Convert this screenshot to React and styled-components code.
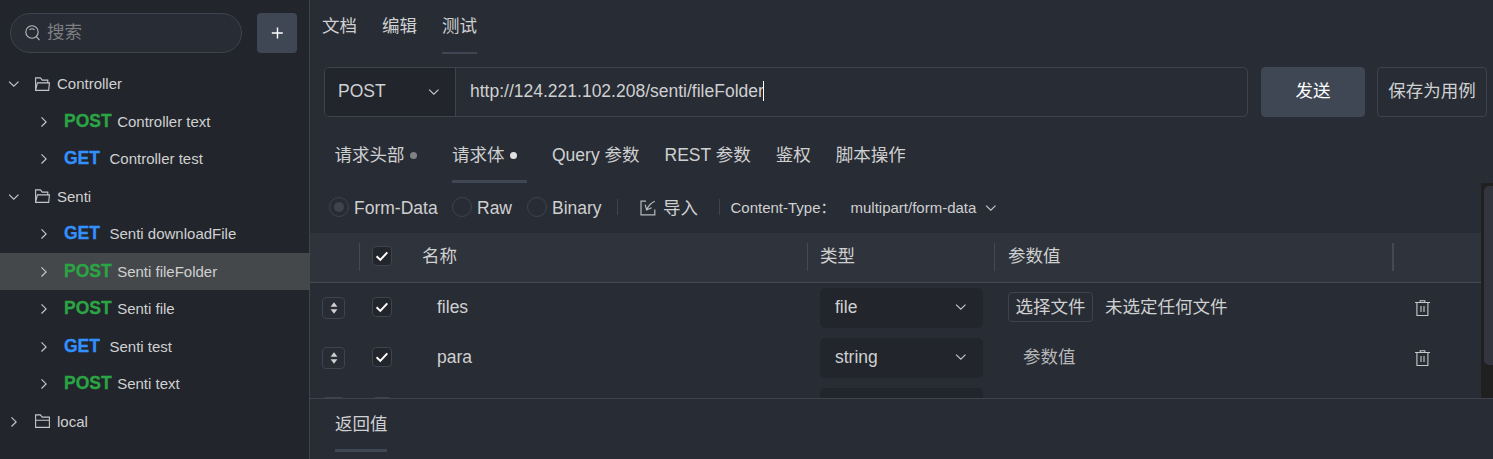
import React from 'react';
import styled, { createGlobalStyle, css } from 'styled-components';

const c = {
  side: '#22252b',
  main: '#282c34',
  head: '#2f333b',
  line: '#3e434e',
  accent: '#404754',
  text: '#cfd0d1',
};

const Global = createGlobalStyle`
  * { box-sizing: border-box; }
  html, body { margin: 0; height: 459px; overflow: hidden; background: ${c.main}; }
  body {
    font-family: "Liberation Sans", Arial, "Noto Sans CJK SC", sans-serif;
    font-size: 17.5px;
    line-height: 24px;
    color: ${c.text};
  }
`;

const Page = styled.div`
  display: flex;
  width: 1493px;
  height: 459px;
  overflow: hidden;
  white-space: nowrap;
`;

/* Sidebar */
const Sidebar = styled.aside`
  flex: 0 0 310px;
  min-width: 0;
  background: ${c.side};
  border-right: 1px solid ${c.line};
`;
const SearchRow = styled.div`
  display: flex;
  gap: 15px;
  padding: 13px 0 12.4px 10px;
`;
const SearchBox = styled.div`
  display: flex;
  align-items: center;
  gap: 7px;
  width: 232px;
  height: 40px;
  padding: 0 14px 3px;
  border: 1px solid ${c.line};
  border-radius: 20px;
  background: ${c.main};
  color: #7d7f82;
  svg { position: relative; top: 1.5px; }
`;
const AddButton = styled.button`
  display: grid;
  place-items: center;
  width: 40px;
  height: 40px;
  padding: 0;
  border: 0;
  border-radius: 4px;
  background: ${c.accent};
`;
const TreeRow = styled.div`
  display: flex;
  align-items: center;
  width: 310px;
  height: 37.5px;
  padding-left: ${(p) => (p.$nested ? '37px' : '7px')};
  font-size: 15px;
  background: ${(p) => (p.$selected ? '#45484b' : 'transparent')};
`;
const FolderLabel = styled.span`
  margin-left: 7px;
`;
const Method = styled.b`
  min-width: 40px;
  margin: 0 5.5px 2px 13px;
  font-size: 17.5px;
  -webkit-text-stroke: 0.3px;
  color: ${(p) => (p.$kind === 'POST' ? '#2ba544' : '#3391ff')};
`;
const TwistySlot = styled.span`
  display: grid;
  place-items: center;
  width: 14px;
  margin-right: ${(p) => (p.$folder ? '14px' : '0')};
`;

/* Main area */
const Main = styled.main`
  display: flex;
  flex-direction: column;
  flex: 1;
  min-width: 0;
  background: ${c.main};
`;
const PageTabs = styled.nav`
  display: flex;
  gap: 25px;
  height: 54px;
  padding-left: 12px;
`;
const PageTab = styled.span`
  width: 35px;
  padding-top: 14px;
  border-bottom: 2px solid ${(p) => (p.$active ? c.accent : 'transparent')};
`;
const RequestBar = styled.div`
  display: flex;
  height: 50px;
  margin: 13px 6px 0 14px;
`;
const UrlGroup = styled.div`
  display: flex;
  width: 924px;
  border: 1px solid ${c.line};
  border-radius: 5px;
  overflow: hidden;
`;
const MethodSelect = styled.div`
  display: flex;
  align-items: center;
  justify-content: space-between;
  width: 131px;
  padding: 0 14px 2px 13px;
  background: ${c.side};
  border-right: 1px solid ${c.line};
  svg { position: relative; top: 1px; }
`;
const UrlField = styled.div`
  display: flex;
  align-items: center;
  padding: 0 0 2px 14px;
`;
const Caret = styled.i`
  width: 1px;
  height: 20px;
  margin-left: -1px;
  background: #fff;
`;
const ActionButton = styled.button`
  width: ${(p) => (p.$primary ? '104px' : '110px')};
  margin-left: ${(p) => (p.$primary ? '13px' : '12px')};
  padding: 0 0 2px;
  border: 1px solid ${(p) => (p.$primary ? c.accent : c.line)};
  border-radius: 4px;
  background: ${(p) => (p.$primary ? c.accent : 'transparent')};
  color: ${(p) => (p.$primary ? '#fff' : c.text)};
  font: inherit;
  white-space: nowrap;
`;
const SectionTabs = styled.nav`
  display: flex;
  gap: 25px;
  height: 66px;
  padding-left: 24.5px;
`;
const SectionTab = styled.span`
  display: flex;
  padding-top: 26px;
  border-bottom: 3px solid ${(p) => (p.$active ? c.accent : 'transparent')};
`;
const Dot = styled.i`
  width: 7px;
  height: 7px;
  margin: 9px 10.5px 0 5px;
  border-radius: 50%;
  background: ${(p) => (p.$bright ? '#e0e0e1' : '#7f8183')};
`;

const Scroller = styled.section`
  display: flex;
  height: 215px;
  overflow: hidden;
`;
const Content = styled.div`
  width: 1171px;
`;
const Track = styled.div`
  width: 12px;
  padding: 3px 0 0 3px;
  background: #202020;
`;
const Thumb = styled.div`
  height: 179px;
  border-radius: 5px 0 0 5px;
  background: #32353e;
`;
const Options = styled.div`
  display: flex;
  align-items: center;
  height: 50px;
  padding: 0 0 1px 19px;
`;
const RadioOption = styled.label`
  display: flex;
  align-items: center;
  gap: 5px;
  width: ${(p) => p.$width}px;
`;
const RadioMark = styled.i`
  display: grid;
  place-items: center;
  width: 20px;
  height: 20px;
  flex: none;
  margin-top: -1px;
  border: 1px solid ${c.line};
  border-radius: 50%;
  ${(p) => p.$on && css`&::after { content: ''; width: 10px; height: 10px; border-radius: 50%; background: ${c.line}; }`}
`;
const Separator = styled.i`
  width: 1px;
  height: 16px;
  margin-top: -1px;
  background: ${c.line};
`;
const ImportLink = styled.span`
  display: flex;
  align-items: center;
  gap: 7px;
  width: 101px;
  padding-left: 22px;
`;
const ContentType = styled.span`
  display: flex;
  align-items: center;
  margin-left: 10.5px;
  font-size: 15px;
`;
const TypeLabel = styled.span`
  width: 120px;
`;
const TypeValue = styled.span`
  margin-right: 8px;
`;

const rowGrid = css`
  display: grid;
  grid-template-columns: 50px 448px 187px 399px 87px;
`;
const HeadRow = styled.div`
  ${rowGrid}
  height: 50px;
  background: ${c.head};
  border-bottom: 1px solid #454950;
`;
const HeadCell = styled.div`
  display: flex;
  align-items: center;
  padding: 0 0 3px ${(p) => p.$pad ?? 0}px;
  background: linear-gradient(#454953, #454953) right 10px / ${(p) => p.$rule ?? 1}px 28px no-repeat;
  &:last-child { background: none; }
`;
const HeadName = styled.span`
  margin-left: 30px;
`;
const Row = styled.div`
  ${rowGrid}
  height: 50px;
`;
const Cell = styled.div`
  display: flex;
  align-items: flex-start;
  padding: ${(p) => p.$top ?? 0}px 0 0 ${(p) => p.$left ?? 0}px;
`;
const CheckMark = styled.i`
  display: grid;
  place-items: center;
  width: 20px;
  height: 20px;
  border: 1px solid ${c.line};
  border-radius: 4px;
  background: ${c.side};
`;
const SortButton = styled.i`
  display: grid;
  place-items: center;
  width: 23px;
  height: 22px;
  border: 1px solid ${c.line};
  border-radius: 4px;
`;
const FieldName = styled.span`
  margin: -2px 0 0 45px;
`;
const TypeSelect = styled.div`
  display: flex;
  align-items: center;
  justify-content: space-between;
  width: 163px;
  height: 40px;
  padding: 0 15px 2px;
  border-radius: 5px;
  background: ${c.side};
`;
const FileButton = styled.button`
  width: 85px;
  height: 30px;
  margin-right: 12px;
  padding: 0 0 1px;
  border: 1px solid ${c.line};
  border-radius: 4px;
  background: transparent;
  color: ${c.text};
  font: inherit;
`;
const FileState = styled.span`
  line-height: 30px;
`;
const Placeholder = styled.span`
  padding-left: 15px;
  line-height: 30px;
  color: #b7b8ba;
`;
const ResponsePane = styled.section`
  flex: 1;
  border-top: 1px solid ${c.line};
  padding-left: 25px;
`;
const ResponseTab = styled.div`
  width: 52px;
  height: 53px;
  padding-top: 13px;
  border-bottom: 3px solid ${c.accent};
`;

const Chevron = ({ right }) => (
  <svg width="14" height="14" viewBox="0 0 14 14" fill="none" stroke="#c6c7c8" strokeWidth="1.2">
    <path d={right ? 'M4.5 2.3l4.6 4.6-4.6 4.6' : 'M2.1 4.6l4.7 4.6 4.7-4.6'} />
  </svg>
);
const Folder = ({ open }) => (
  <svg width="15" height="15" viewBox="0 0 15 15" fill="none" stroke="#c6c7c8" strokeWidth="1.1">
    {open ? (
      <path d="M.6 13.4V.9h4.8l1.8 2.2h5.6v2.8M.6 13.4L2.4 5.9h12l-.7 7.5z" />
    ) : (
      <path d="M.6 13.4V.9h4.8l1.8 2.2h7.2v10.3zM.6 6.3h13.8" />
    )}
  </svg>
);
const SearchIcon = () => (
  <svg width="15" height="16" viewBox="0 0 15 16" fill="none" stroke="#b9bbc0" strokeWidth="1.1">
    <circle cx="7" cy="7" r="6.2" />
    <path d="M4.5 4.8Q7 2.7 9.5 4.8M11.3 11.7l3.2 3.5" />
  </svg>
);
const PlusIcon = () => (
  <svg width="12" height="12" viewBox="0 0 12 12" stroke="#fff" strokeWidth="1.4">
    <path d="M6.5 .5v11M.8 6h11" />
  </svg>
);
const ImportIcon = () => (
  <svg width="16" height="16" viewBox="0 0 16 16" fill="none" stroke="#b8babc" strokeWidth="1.2">
    <path d="M6 1.2H1v13.6h13.8V9.5M14.8 1.2Q9.5 3.5 6.7 9.6M5.2 4.6l1.4 5.3 5-2.2" />
  </svg>
);
const Check = () => (
  <svg width="14" height="12" viewBox="0 0 14 12" fill="none" stroke="#fff" strokeWidth="2">
    <path d="M1.6 6.2l3.7 3.7 7-7.5" />
  </svg>
);
const SortIcon = () => (
  <svg width="8" height="12" viewBox="0 0 8 12" fill="#cfd0d1">
    <path d="M4 .3l3.4 4.4H.6zM4 11.8L.6 7.3h6.8z" />
  </svg>
);
const TrashIcon = () => (
  <svg width="15" height="17" viewBox="0 0 15 17" fill="none" stroke="#c6c7c8" strokeWidth="1.1">
    <path d="M0 2.5h15M5.2 2.3V.8h4.6v1.5M1.9 3v12.5h11V3" />
    <path d="M6 6v6M9 6v6" stroke="#8a8c8f" strokeWidth="1.8" />
  </svg>
);

const Checked = () => <CheckMark><Check /></CheckMark>;

const tree = [
  { folder: 'Controller', open: true },
  { method: 'POST', name: 'Controller text' },
  { method: 'GET', name: 'Controller test' },
  { folder: 'Senti', open: true },
  { method: 'GET', name: 'Senti downloadFile' },
  { method: 'POST', name: 'Senti fileFolder', selected: true },
  { method: 'POST', name: 'Senti file' },
  { method: 'GET', name: 'Senti test' },
  { method: 'POST', name: 'Senti text' },
  { folder: 'local' },
];

const TreeItem = ({ item }) => (
  <TreeRow $nested={!item.folder} $selected={item.selected}>
    <TwistySlot $folder={!!item.folder}><Chevron right={!item.open} /></TwistySlot>
    {item.folder ? (
      <>
        <Folder open={item.open} />
        <FolderLabel>{item.folder}</FolderLabel>
      </>
    ) : (
      <>
        <Method $kind={item.method}>{item.method}</Method>
        <span>{item.name}</span>
      </>
    )}
  </TreeRow>
);

const ParamRow = ({ name, type, children }) => (
  <Row>
    <Cell $top={14} $left={12}><SortButton><SortIcon /></SortButton></Cell>
    <Cell $top={14} $left={12}><Checked /><FieldName>{name}</FieldName></Cell>
    <Cell $top={5} $left={12}><TypeSelect>{type}<Chevron /></TypeSelect></Cell>
    <Cell $top={9} $left={13}>{children}</Cell>
    <Cell $top={17} $left={21}><TrashIcon /></Cell>
  </Row>
);

export default function App() {
  return (
    <Page>
      <Global />
      <Sidebar>
        <SearchRow>
          <SearchBox><SearchIcon />搜索</SearchBox>
          <AddButton><PlusIcon /></AddButton>
        </SearchRow>
        {tree.map((item) => <TreeItem key={item.folder || item.name} item={item} />)}
      </Sidebar>
      <Main>
        <PageTabs>
          <PageTab>文档</PageTab>
          <PageTab>编辑</PageTab>
          <PageTab $active>测试</PageTab>
        </PageTabs>
        <RequestBar>
          <UrlGroup>
            <MethodSelect>POST<Chevron /></MethodSelect>
            <UrlField>http://124.221.102.208/senti/fileFolder<Caret /></UrlField>
          </UrlGroup>
          <ActionButton $primary>发送</ActionButton>
          <ActionButton>保存为用例</ActionButton>
        </RequestBar>
        <SectionTabs>
          <SectionTab>请求头部<Dot /></SectionTab>
          <SectionTab $active>请求体<Dot $bright /></SectionTab>
          <SectionTab>Query 参数</SectionTab>
          <SectionTab>REST 参数</SectionTab>
          <SectionTab>鉴权</SectionTab>
          <SectionTab>脚本操作</SectionTab>
        </SectionTabs>
        <Scroller>
          <Content>
            <Options>
              <RadioOption $width={123}><RadioMark $on />Form-Data</RadioOption>
              <RadioOption $width={75}><RadioMark />Raw</RadioOption>
              <RadioOption $width={90}><RadioMark />Binary</RadioOption>
              <Separator />
              <ImportLink><ImportIcon />导入</ImportLink>
              <Separator />
              <ContentType>
                <TypeLabel>Content-Type：</TypeLabel>
                <TypeValue>multipart/form-data</TypeValue>
                <Chevron />
              </ContentType>
            </Options>
            <HeadRow>
              <HeadCell />
              <HeadCell $pad={12}><Checked /><HeadName>名称</HeadName></HeadCell>
              <HeadCell $pad={12}>类型</HeadCell>
              <HeadCell $pad={13} $rule={2}>参数值</HeadCell>
              <HeadCell />
            </HeadRow>
            <ParamRow name="files" type="file">
              <FileButton>选择文件</FileButton>
              <FileState>未选定任何文件</FileState>
            </ParamRow>
            <ParamRow name="para" type="string">
              <Placeholder>参数值</Placeholder>
            </ParamRow>
            <ParamRow />
          </Content>
          <Track><Thumb /></Track>
        </Scroller>
        <ResponsePane>
          <ResponseTab>返回值</ResponseTab>
        </ResponsePane>
      </Main>
    </Page>
  );
}
